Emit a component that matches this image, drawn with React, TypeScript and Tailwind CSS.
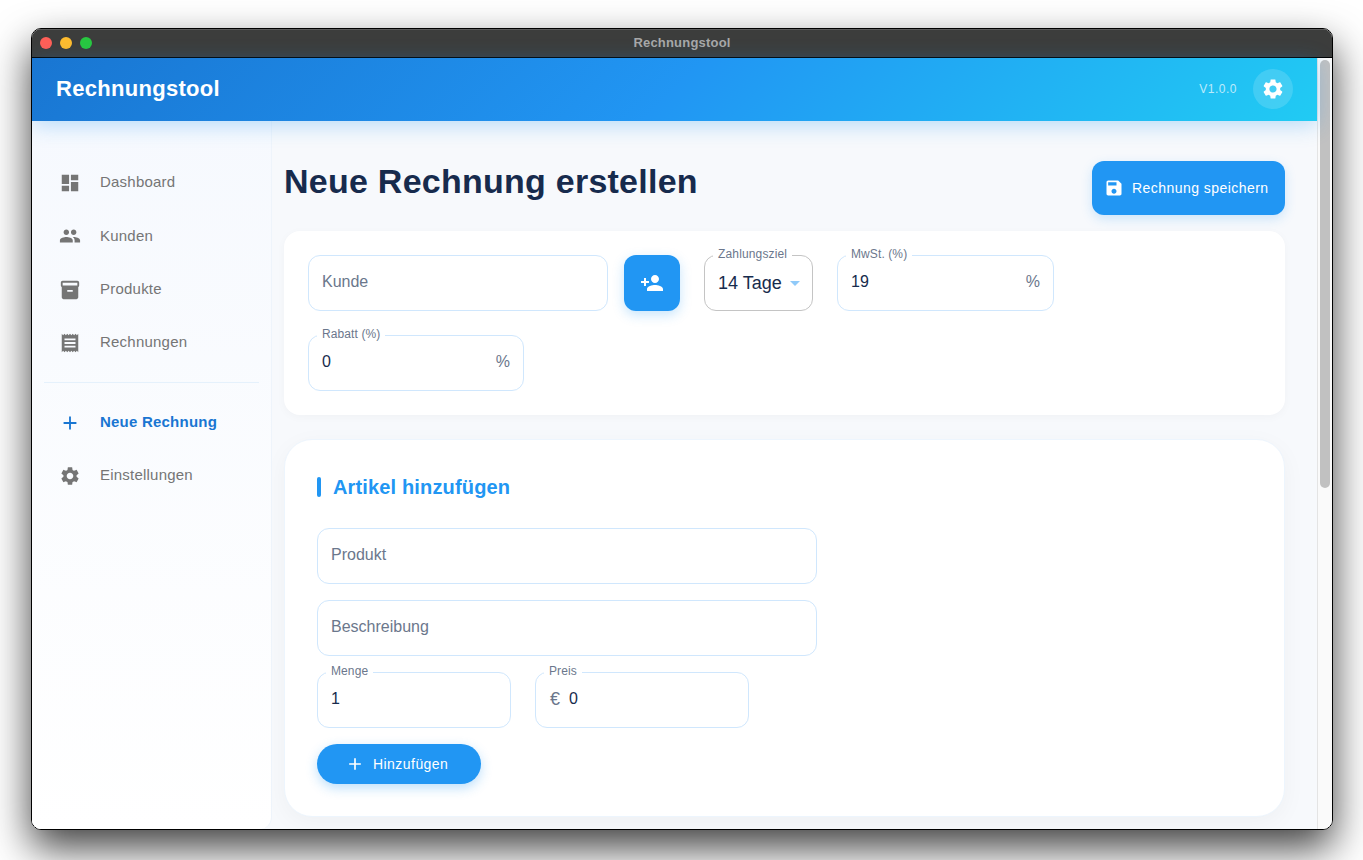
const paths = {
  dashboard: 'M3 13h8V3H3v10zm0 8h8v-6H3v6zm10 0h8V11h-8v10zm0-18v6h8V3h-8z',
  people:
    'M16 11c1.66 0 2.99-1.34 2.99-3S17.66 5 16 5c-1.66 0-3 1.34-3 3s1.34 3 3 3zm-8 0c1.66 0 2.99-1.34 2.99-3S9.66 5 8 5C6.34 5 5 6.34 5 8s1.34 3 3 3zm0 2c-2.33 0-7 1.17-7 3.5V19h14v-2.5c0-2.33-4.67-3.5-7-3.5zm8 0c-.29 0-.62.02-.97.05 1.16.84 1.97 1.97 1.97 3.45V19h6v-2.5c0-2.33-4.67-3.5-7-3.5z',
  inventory:
    'M20 2H4c-1 0-2 .9-2 2v3.01c0 .72.43 1.34 1 1.69V20c0 1.1 1.1 2 2 2h14c.9 0 2-.9 2-2V8.7c.57-.35 1-.97 1-1.69V4c0-1.1-1-2-2-2zm-5 12H9v-2h6v2zm5-7H4V4l16-.02V7z',
  receipt:
    'M18 17H6v-2h12v2zm0-4H6v-2h12v2zm0-4H6V7h12v2zM3 22l1.5-1.5L6 22l1.5-1.5L9 22l1.5-1.5L12 22l1.5-1.5L15 22l1.5-1.5L18 22l1.5-1.5L21 22V2l-1.5 1.5L18 2l-1.5 1.5L15 2l-1.5 1.5L12 2l-1.5 1.5L9 2 7.5 3.5 6 2 4.5 3.5 3 2v20z',
  add: 'M19 13h-6v6h-2v-6H5v-2h6V5h2v6h6v2z',
  settings:
    'M19.14 12.94c.04-.3.06-.61.06-.94 0-.32-.02-.64-.07-.94l2.03-1.58c.18-.14.23-.41.12-.61l-1.92-3.32c-.12-.22-.37-.29-.59-.22l-2.39.96c-.5-.38-1.03-.7-1.62-.94l-.36-2.54c-.04-.24-.24-.41-.48-.41h-3.84c-.24 0-.43.17-.47.41l-.36 2.54c-.59.24-1.13.57-1.62.94l-2.39-.96c-.22-.08-.47 0-.59.22L2.74 8.87c-.12.21-.08.47.12.61l2.03 1.58c-.05.3-.09.63-.09.94s.02.64.07.94l-2.03 1.58c-.18.14-.23.41-.12.61l1.92 3.32c.12.22.37.29.59.22l2.39-.96c.5.38 1.03.7 1.62.94l.36 2.54c.05.24.24.41.48.41h3.84c.24 0 .44-.17.47-.41l.36-2.54c.59-.24 1.13-.56 1.62-.94l2.39.96c.22.08.47 0 .59-.22l1.92-3.32c.12-.22.07-.47-.12-.61l-2.01-1.58zM12 15.6c-1.98 0-3.6-1.62-3.6-3.6s1.62-3.6 3.6-3.6 3.6 1.62 3.6 3.6-1.62 3.6-3.6 3.6z',
  save: 'M17 3H5c-1.11 0-2 .9-2 2v14c0 1.1.89 2 2 2h14c1.1 0 2-.9 2-2V7l-4-4zm-5 16c-1.66 0-3-1.34-3-3s1.34-3 3-3 3 1.34 3 3-1.34 3-3 3zm3-10H5V5h10v4z',
  personAdd:
    'M15 12c2.21 0 4-1.79 4-4s-1.79-4-4-4-4 1.79-4 4 1.79 4 4 4zm-9-2V7H4v3H1v2h3v3h2v-3h3v-2H6zm9 4c-2.67 0-8 1.34-8 4v2h16v-2c0-2.66-5.33-4-8-4z',
};

function Icon({ d, className }: { d: string; className: string }) {
  return (
    <svg viewBox="0 0 24 24" fill="currentColor" className={className}>
      <path d={d} />
    </svg>
  );
}

const navItems = [
  { label: 'Dashboard', icon: paths.dashboard, className: 'h-[53px]' },
  { label: 'Kunden', icon: paths.people, className: 'h-[54px]' },
  { label: 'Produkte', icon: paths.inventory, className: 'h-[53px]' },
  { label: 'Rechnungen', icon: paths.receipt, className: 'h-[53px]' },
];

function NavItem({
  label,
  icon,
  className,
  active,
}: {
  label: string;
  icon: string;
  className: string;
  active?: boolean;
}) {
  return (
    <div className={`flex items-center pl-[27px] ${className}`}>
      <Icon d={icon} className={active ? 'w-[22px] h-[22px] text-[#1976d2]' : 'w-[22px] h-[22px] text-[#757575]'} />
      <span
        className={
          active
            ? 'ml-[19px] text-[15px] tracking-[0.22px] font-bold text-[#1976d2]'
            : 'ml-[19px] text-[15px] tracking-[0.22px] text-[#757575]'
        }
      >
        {label}
      </span>
    </div>
  );
}

// outlined text field, label sits in the notch of the border
function Field({
  label,
  placeholder,
  value,
  prefix,
  suffix,
  className,
}: {
  label?: string;
  placeholder?: string;
  value?: string;
  prefix?: string;
  suffix?: string;
  className: string;
}) {
  return (
    <div
      className={`relative h-14 rounded-xl border border-[#d0e7fd] bg-white flex items-center px-[13px] pb-[2px] ${className}`}
    >
      {label && (
        <span className="absolute left-2 -top-[10px] bg-white px-[5px] text-xs leading-4 tracking-[0.1px] text-[#6b778c]">
          {label}
        </span>
      )}
      {prefix && <span className="ml-px mr-[9px] text-lg text-[#6b778c]">{prefix}</span>}
      {placeholder && <span className="text-base text-[#6b778c]">{placeholder}</span>}
      {value && <span className="text-base text-[#172b4d]">{value}</span>}
      {suffix && <span className="ml-auto text-base text-[#6b778c]">{suffix}</span>}
    </div>
  );
}

export default function App() {
  return (
    <div className="h-[860px] overflow-hidden bg-white pl-[31px] pt-[28px] font-['Liberation_Sans',Arial,sans-serif]">
      <div className="flex flex-col w-[1302px] h-[802px] rounded-[10px] border border-black overflow-hidden shadow-[0_18px_40px_rgba(0,0,0,0.75)]">
        {/* Title bar */}
        <div className="shrink-0 h-[29px] pb-[2px] bg-[#3c3d3c] border-t border-t-[#5c5c5c] border-b border-b-black flex items-center relative">
          <div className="flex gap-2 pl-2">
            <div className="w-3 h-3 rounded-full bg-[#ff5f57]" />
            <div className="w-3 h-3 rounded-full bg-[#febc2e]" />
            <div className="w-3 h-3 rounded-full bg-[#28c840]" />
          </div>
          <span className="absolute inset-x-0 text-center text-[13px] font-bold tracking-[0.2px] text-[#a8a8a8]">
            Rechnungstool
          </span>
        </div>

        <div className="flex flex-1 min-h-0">
          <div className="flex flex-col flex-1 min-w-0">
            {/* App bar */}
            <header className="relative z-10 shrink-0 h-[63px] flex items-center pl-6 pr-6 pb-[2px] bg-[linear-gradient(135deg,#1976d2_0%,#2196f3_50%,#21cbf3_100%)] shadow-[0_4px_20px_rgba(33,150,243,0.3)]">
              <h1 className="text-[22px] font-bold tracking-[0.3px] text-white">Rechnungstool</h1>
              <span className="ml-auto text-xs tracking-[0.5px] text-white/70">V1.0.0</span>
              <div className="ml-4 w-10 h-10 rounded-full bg-white/15 flex items-center justify-center">
                <Icon d={paths.settings} className="w-6 h-6 text-white" />
              </div>
            </header>

            <div className="flex flex-1 min-h-0 bg-[#f7f9fc]">
              {/* Sidebar */}
              <aside className="shrink-0 w-[240px] pt-[35px] rounded-br-xl border-r border-[#eef4fb] bg-gradient-to-b from-[#f6f9fe] to-white">
                {navItems.map((item) => (
                  <NavItem key={item.label} {...item} />
                ))}
                <div className="mx-3 mt-[13px] mb-[13px] h-px bg-[#e5f1fc]" />
                <NavItem label="Neue Rechnung" icon={paths.add} className="h-[53px]" active />
                <NavItem label="Einstellungen" icon={paths.settings} className="h-[53px]" />
              </aside>

              {/* Main */}
              <main className="flex-1 min-w-0 overflow-hidden pl-3 pr-8 pt-10">
                <div className="flex items-start justify-between mb-4">
                  <h2 className="text-[34px] tracking-[0.25px] leading-10 font-bold text-[#172b4d]">
                    Neue Rechnung erstellen
                  </h2>
                  <button className="h-[54px] w-[193px] rounded-xl bg-[#2196f3] flex items-center pl-3 text-sm tracking-[0.45px] text-white shadow-[0_4px_12px_rgba(33,150,243,0.2)]">
                    <Icon d={paths.save} className="w-5 h-5 mr-2" />
                    Rechnung speichern
                  </button>
                </div>

                <section className="rounded-2xl bg-white p-6 shadow-[0_2px_10px_rgba(0,0,0,0.03)] flex flex-wrap gap-y-6">
                  <Field placeholder="Kunde" className="w-[300px]" />
                  <button className="ml-4 w-14 h-14 rounded-xl bg-[#2196f3] flex items-center justify-center text-white shadow-[0_4px_12px_rgba(33,150,243,0.25)]">
                    <Icon d={paths.personAdd} className="w-6 h-6" />
                  </button>
                  <div className="relative ml-6 w-[109px] h-14 rounded-xl border border-[#c4c4c4] flex items-center pl-[13px] pb-[1px]">
                    <span className="absolute left-2 -top-[10px] bg-white px-[5px] text-xs leading-4 tracking-[0.15px] text-[#6b778c]">
                      Zahlungsziel
                    </span>
                    <span className="text-lg text-[#172b4d]">14 Tage</span>
                    <div className="ml-2 mt-px border-x-[5px] border-x-transparent border-t-[5px] border-t-[#90caf9]" />
                  </div>
                  <Field label="MwSt. (%)" value="19" suffix="%" className="ml-6 w-[217px]" />
                  <Field label="Rabatt (%)" value="0" suffix="%" className="w-[216px]" />
                </section>

                <section className="mt-6 h-[378px] rounded-[28px] border border-[#edf5fd] bg-white pt-[31px] pl-8 shadow-[0_6px_24px_rgba(0,0,0,0.04)]">
                  <div className="flex items-center h-[32px] mb-[25px]">
                    <div className="w-1 h-5 rounded-sm bg-[#2196f3]" />
                    <h3 className="ml-3 text-xl font-bold tracking-[0.15px] text-[#2196f3]">Artikel hinzufügen</h3>
                  </div>
                  <div className="flex flex-col gap-4 w-[500px]">
                    <Field placeholder="Produkt" className="w-full" />
                    <Field placeholder="Beschreibung" className="w-full" />
                  </div>
                  <div className="flex gap-6 mt-4">
                    <Field label="Menge" value="1" className="w-[194px]" />
                    <Field label="Preis" prefix="€" value="0" className="w-[214px]" />
                  </div>
                  <button className="mt-4 h-10 w-[164px] rounded-full bg-[#2196f3] flex items-center pl-7 text-sm tracking-[0.45px] text-white shadow-[0_4px_12px_rgba(33,150,243,0.3)]">
                    <Icon d={paths.add} className="w-5 h-5 mr-2" />
                    Hinzufügen
                  </button>
                </section>
              </main>
            </div>
          </div>

          {/* Scrollbar */}
          <div className="shrink-0 w-[15px] border-l border-[#e4e4e4] bg-[#fafafa] pt-[2px] pl-[2px]">
            <div className="w-[10px] h-[428px] rounded-full bg-[#c1c1c1]" />
          </div>
        </div>
      </div>
    </div>
  );
}
